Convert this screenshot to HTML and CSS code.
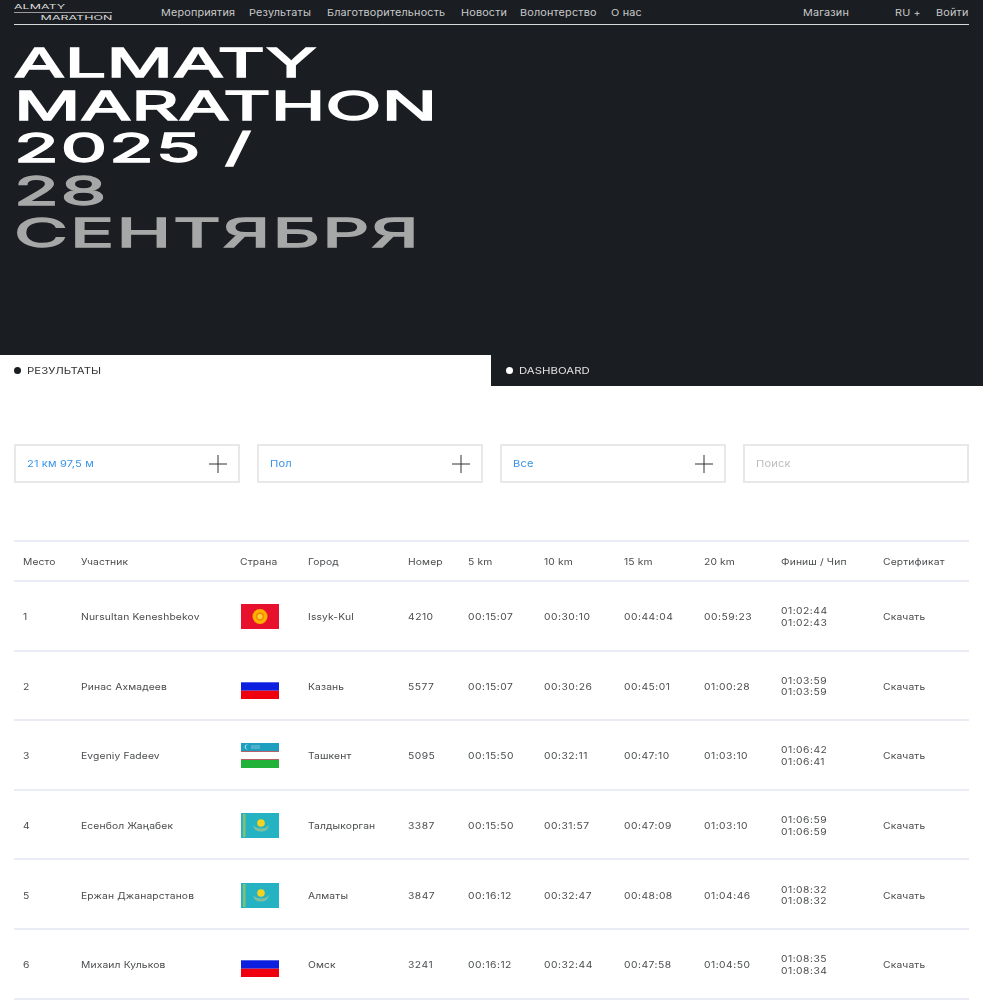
FILE: index.html
```html
<!DOCTYPE html>
<html lang="ru">
<head>
<meta charset="utf-8">
<title>Almaty Marathon 2025</title>
<link rel="stylesheet" href="styles.css">
</head>
<body>
<section class="hero">
  <header class="nav">
    <a class="logo"><span class="logo-top"><span class="logo-word">ALMATY</span></span><span class="logo-bottom"><span class="logo-word logo-word-right">MARATHON</span></span></a>
    <a class="nav-item">Мероприятия</a>
    <a class="nav-item">Результаты</a>
    <a class="nav-item">Благотворительность</a>
    <a class="nav-item">Новости</a>
    <a class="nav-item">Волонтерство</a>
    <a class="nav-item">О нас</a>
    <a class="nav-item nav-spacer">Магазин</a>
    <a class="nav-item">RU +</a>
    <a class="nav-item">Войти</a>
  </header>
  <h1 class="title">
    <span class="title-line">ALMATY</span>
    <span class="title-line">MARATHON</span>
    <span class="title-line title-num">2025 /</span>
    <span class="title-line muted title-num">28</span>
    <span class="title-line muted title-cyr">СЕНТЯБРЯ</span>
  </h1>
</section>
<nav class="tabs">
  <div class="tab tab-active"><i class="dot"></i><span class="tab-label">РЕЗУЛЬТАТЫ</span></div>
  <div class="tab tab-dark"><i class="dot"></i><span class="tab-label">DASHBOARD</span></div>
</nav>
<section class="filters">
  <div class="filter"><span class="wide">21 км 97,5 м</span><svg class="plus" viewBox="0 0 18 18"><path d="M0 9h18M9 0v18"/></svg></div>
  <div class="filter"><span class="wide">Пол</span><svg class="plus" viewBox="0 0 18 18"><path d="M0 9h18M9 0v18"/></svg></div>
  <div class="filter"><span class="wide">Все</span><svg class="plus" viewBox="0 0 18 18"><path d="M0 9h18M9 0v18"/></svg></div>
  <div class="filter filter-search"><span class="wide">Поиск</span></div>
</section>
<section class="results">
  <div class="row row-head">
    <span class="wide">Место</span><span class="wide">Участник</span><span class="wide">Страна</span><span class="wide">Город</span><span class="wide">Номер</span><span class="wide">5 km</span><span class="wide">10 km</span><span class="wide">15 km</span><span class="wide">20 km</span><span class="wide">Финиш / Чип</span><span class="wide">Сертификат</span>
  </div>
  <div class="row">
    <span class="wide">1</span><span class="wide">Nursultan Keneshbekov</span>
    <svg class="flag" viewBox="0 0 38 25"><rect width="38" height="25" fill="#e8112d"/><circle cx="19" cy="12.500" r="7.500" fill="#ffb000"/><circle cx="19" cy="12.500" r="4.200" fill="#f08a00"/><circle cx="19" cy="12.500" r="2.600" fill="#ffd23a"/></svg>
    <span class="wide">Issyk-Kul</span><span class="wide num">4210</span><span class="wide num">00:15:07</span><span class="wide num">00:30:10</span><span class="wide num">00:44:04</span><span class="wide num">00:59:23</span>
    <div class="finish"><span class="wide num">01:02:44</span><span class="wide num">01:02:43</span></div><span class="wide">Скачать</span>
  </div>
  <div class="row">
    <span class="wide">2</span><span class="wide">Ринас Ахмадеев</span>
    <svg class="flag" viewBox="0 0 38 25"><rect width="38" height="8.300" fill="#fff"/><rect y="8.300" width="38" height="8.400" fill="#0b1fe0"/><rect y="16.700" width="38" height="8.300" fill="#f0000f"/></svg>
    <span class="wide">Казань</span><span class="wide num">5577</span><span class="wide num">00:15:07</span><span class="wide num">00:30:26</span><span class="wide num">00:45:01</span><span class="wide num">01:00:28</span>
    <div class="finish"><span class="wide num">01:03:59</span><span class="wide num">01:03:59</span></div><span class="wide">Скачать</span>
  </div>
  <div class="row">
    <span class="wide">3</span><span class="wide">Evgeniy Fadeev</span>
    <svg class="flag" viewBox="0 0 38 25"><rect width="38" height="8" fill="#1e9fc0"/><rect y="8" width="38" height="1" fill="#b8606a"/><rect y="16" width="38" height="1" fill="#b8606a"/><rect y="17" width="38" height="8" fill="#22b23a"/><circle cx="6" cy="4" r="2.400" fill="#a8d8e8"/><circle cx="7" cy="4" r="2.200" fill="#1e9fc0"/><rect x="10" y="2" width="9" height="4" fill="#4fb0cc"/></svg>
    <span class="wide">Ташкент</span><span class="wide num">5095</span><span class="wide num">00:15:50</span><span class="wide num">00:32:11</span><span class="wide num">00:47:10</span><span class="wide num">01:03:10</span>
    <div class="finish"><span class="wide num">01:06:42</span><span class="wide num">01:06:41</span></div><span class="wide">Скачать</span>
  </div>
  <div class="row">
    <span class="wide">4</span><span class="wide">Есенбол Жаңабек</span>
    <svg class="flag" viewBox="0 0 38 25"><rect width="38" height="25" fill="#25b3c4"/><rect x="2" y="1" width="2.500" height="23" fill="#86bf72"/><circle cx="20" cy="10" r="3.800" fill="#f4d320"/><path d="M12 12c1 5 4 6.500 8 6.500s7-1.500 8-6.500c-2 2.500-4 3.500-8 3.500s-6-1-8-3.500z" fill="#7cc0a0"/></svg>
    <span class="wide">Талдыкорган</span><span class="wide num">3387</span><span class="wide num">00:15:50</span><span class="wide num">00:31:57</span><span class="wide num">00:47:09</span><span class="wide num">01:03:10</span>
    <div class="finish"><span class="wide num">01:06:59</span><span class="wide num">01:06:59</span></div><span class="wide">Скачать</span>
  </div>
  <div class="row">
    <span class="wide">5</span><span class="wide">Ержан Джанарстанов</span>
    <svg class="flag" viewBox="0 0 38 25"><rect width="38" height="25" fill="#25b3c4"/><rect x="2" y="1" width="2.500" height="23" fill="#86bf72"/><circle cx="20" cy="10" r="3.800" fill="#f4d320"/><path d="M12 12c1 5 4 6.500 8 6.500s7-1.500 8-6.500c-2 2.500-4 3.500-8 3.500s-6-1-8-3.500z" fill="#7cc0a0"/></svg>
    <span class="wide">Алматы</span><span class="wide num">3847</span><span class="wide num">00:16:12</span><span class="wide num">00:32:47</span><span class="wide num">00:48:08</span><span class="wide num">01:04:46</span>
    <div class="finish"><span class="wide num">01:08:32</span><span class="wide num">01:08:32</span></div><span class="wide">Скачать</span>
  </div>
  <div class="row">
    <span class="wide">6</span><span class="wide">Михаил Кульков</span>
    <svg class="flag" viewBox="0 0 38 25"><rect width="38" height="8.300" fill="#fff"/><rect y="8.300" width="38" height="8.400" fill="#0b1fe0"/><rect y="16.700" width="38" height="8.300" fill="#f0000f"/></svg>
    <span class="wide">Омск</span><span class="wide num">3241</span><span class="wide num">00:16:12</span><span class="wide num">00:32:44</span><span class="wide num">00:47:58</span><span class="wide num">01:04:50</span>
    <div class="finish"><span class="wide num">01:08:35</span><span class="wide num">01:08:34</span></div><span class="wide">Скачать</span>
  </div>
</section>
</body>
</html>
```
FILE: styles.css
```css
* { box-sizing: border-box; }
html, body { margin: 0; padding: 0; }
html { overflow: hidden; height: 1000px; }
body {
  background: #fff;
  color: #4a4c4e;
  font-family: Inter, "Liberation Sans", sans-serif;
  font-size: 8.8px;
  filter: blur(.3px);
}
.wide {
  display: inline-block;
  white-space: nowrap;
  transform: scaleX(1.17);
  transform-origin: left center;
  letter-spacing: .12px;
}
.num { letter-spacing: .42px; }
.hero {
  height: 355px;
  background: #1a1d21;
  padding: 0 14px;
  color: #fff;
}
.nav {
  height: 25px;
  border-bottom: 1px solid #d8d9d9;
  display: grid;
  grid-template-columns: 147px 88px 78px 134px 59px 91px 192px 92px 41px 33px;
  align-items: center;
  padding-bottom: 1px;
}
.nav-item {
  font-size: 9.5px;
  color: #c8c9ca;
  white-space: nowrap;
  display: inline-block;
  transform: scaleX(1.14);
  transform-origin: left center;
  letter-spacing: .15px;
}
.logo {
  width: 98px;
  height: 22px;
  margin-top: 2px;
  display: flex;
  flex-direction: column;
  justify-content: center;
  font-size: 6.5px;
  color: #dcdcdc;
  line-height: 7px;
}
.logo-top {
  display: block;
  border-bottom: 1px solid #9a9b9c;
  padding-bottom: 1px;
  margin-bottom: 2px;
}
.logo-bottom { display: block; text-align: right; }
.logo-word {
  display: inline-block;
  white-space: nowrap;
  transform: scaleX(1.92);
  transform-origin: left center;
}
.logo-word-right { transform-origin: right center; }
.title {
  width: fit-content;
  margin: 17px 0 0;
  font-weight: 400;
  font-size: 40px;
  line-height: 42.5px;
  transform: scaleX(1.84);
  transform-origin: left top;
  -webkit-text-stroke: 1.4px currentColor;
}
.title-line { display: block; white-space: nowrap; }
.title-cyr { letter-spacing: 1.2px; }
.title-num { letter-spacing: 1px; }
.muted { color: #a6a8a8; }
.tabs {
  display: grid;
  grid-template-columns: 491px 1fr;
  height: 31px;
}
.tab {
  display: flex;
  align-items: center;
  gap: 6px;
  padding: 0 14px 1px;
  font-size: 9.5px;
  color: #333;
}
.tab-dark { background: #1a1d21; color: #e0e0e0; padding-left: 15px; }
.tab-label { display: inline-block; transform: scaleX(1.2); transform-origin: left center; white-space: nowrap; }
.dot { width: 7px; height: 7px; border-radius: 50%; background: #1a1d21; }
.tab-dark .dot { background: #fff; }
.filters {
  display: grid;
  grid-template-columns: repeat(4, 226px);
  gap: 17px;
  padding: 58px 14px 0;
}
.filter {
  height: 39px;
  border: 2px solid #e8e8e9;
  display: flex;
  align-items: center;
  justify-content: space-between;
  padding: 0 11px;
  font-size: 9.5px;
  color: #3b93e6;
}
.filter-search { color: #bdbdbd; }
.plus { width: 18px; height: 18px; fill: none; stroke: #333; stroke-width: 1; }
.results { margin: 57px 14px 0; border-top: 2px solid #e9ebf5; }
.row {
  display: grid;
  grid-template-columns: 58px 159px 68px 100px 60px 76px 80px 80px 77px 102px 1fr;
  padding: 2px 0 0 9px;
  height: 69.6px;
  align-items: center;
  border-bottom: 2px solid #e9ebf5;
}
.row-head { height: 40px; padding-top: 0; }
.flag { width: 38px; height: 25px; margin-left: 1px; display: block; }
.finish { display: flex; flex-direction: column; line-height: 11.5px; }
```
